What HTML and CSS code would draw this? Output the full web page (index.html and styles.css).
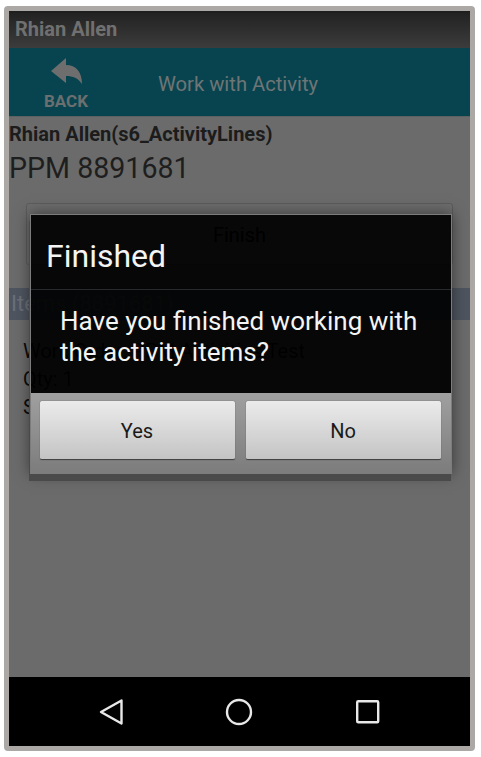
FILE: index.html
```html
<!DOCTYPE html>
<html lang="en">
<head>
  <meta charset="UTF-8">
  <title>Work with Activity</title>
  <link rel="stylesheet" href="styles.css">
</head>
<body>

  <div class="phone">
    <!-- TITLE BAR -->
    <div class="title-bar">Rhian Allen</div>

    <!-- HEADER -->
    <header class="app-header">
      <a class="back-btn" href="#">
        <svg class="back-icon" width="32" height="26" viewBox="0 0 32 26">
          <path d="M0 13 L15 0 L15 7 C25 7 31 14 31 26 C27 20 22 18 15 18 L15 25 Z" fill="#6e6e6e"/>
        </svg>
        <span>BACK</span>
      </a>
      <h1 class="app-title">Work with Activity</h1>
    </header>

    <!-- CONTENT (dimmed) -->
    <main class="content">
      <p class="owner">Rhian Allen(s6_ActivityLines)</p>
      <p class="ref">PPM 8891681</p>
      <div class="finish-btn">Finish</div>
      <div class="section-bar">Items (8891681)</div>
      <div class="item">
        <p>Work Order: PPM Activities Test</p>
        <p>Qty: 1</p>
        <p>Status: Open</p>
      </div>
    </main>

    <!-- NAV BAR -->
    <nav class="nav-bar">
      <svg width="26" height="28" viewBox="0 0 26 28">
        <path d="M23.5 2.5 L3 14 L23.5 25.5 Z" fill="none" stroke="#e8e8e8" stroke-width="2.4" stroke-linejoin="round"/>
      </svg>
      <svg width="28" height="28" viewBox="0 0 28 28">
        <circle cx="14" cy="14" r="12" fill="none" stroke="#e8e8e8" stroke-width="2.4"/>
      </svg>
      <svg class="nav-recent" width="24" height="24" viewBox="0 0 24 24">
        <rect x="1.2" y="1.2" width="21" height="21" rx="1" fill="none" stroke="#e8e8e8" stroke-width="2.4"/>
      </svg>
    </nav>

    <!-- DIALOG -->
    <div class="dialog">
      <h2 class="dialog-title">Finished</h2>
      <p class="dialog-msg">Have you finished working with the activity items?</p>
      <div class="dialog-actions">
        <button type="button">Yes</button>
        <button type="button">No</button>
      </div>
    </div>
  </div>

</body>
</html>
```

FILE: styles.css
```css
/* ---------- BASE ---------- */
* {
  margin: 0;
  padding: 0;
  box-sizing: border-box;
  font-family: Roboto, 'Noto Sans', sans-serif;
}
body {
  background: #fff;
  padding: 6px 6px 6px 4px;
  overflow: hidden;
}
a {
  text-decoration: none;
  color: inherit;
}

/* ---------- FRAME ---------- */
.phone {
  position: relative;
  width: 471px;
  height: 745px;
  border: 5px solid #aca8a6;
  border-radius: 4px;
  background: #6b6b6b;
  display: flex;
  flex-direction: column;
}

/* ---------- TITLE BAR ---------- */
.title-bar {
  height: 37px;
  flex-shrink: 0;
  padding-left: 6px;
  line-height: 37px;
  font-size: 20px;
  font-weight: 700;
  color: #707070;
  background: linear-gradient(#1c1c1c, #232323 8%, #3c3c3c);
}

/* ---------- HEADER ---------- */
.app-header {
  height: 69px;
  flex-shrink: 0;
  display: flex;
  align-items: center;
  background: #08444f;
  border-bottom: 1px solid #5c6262;
}
.back-btn {
  width: 114px;
  padding-top: 5px;
  display: flex;
  flex-direction: column;
  align-items: center;
  gap: 7px;
  font-size: 17px;
  line-height: 20px;
  font-weight: 700;
  color: #6a6f70;
}
.back-icon {
  margin-left: 1px;
}
.app-title {
  margin-left: 35px;
  padding-top: 4px;
  font-size: 20.2px;
  font-weight: 400;
  color: #6f7576;
}

/* ---------- CONTENT ---------- */
.content {
  flex: 1;
  color: #161616;
}
.owner {
  margin-top: 5px;
  font-size: 20px;
  font-weight: 700;
  line-height: 24px;
  color: #1c1c1c;
}
.ref {
  margin-top: 4px;
  font-size: 28.6px;
  line-height: 36px;
  color: #1e1e1e;
}
.finish-btn {
  height: 62px;
  margin: 17px 17px 23px;
  line-height: 62px;
  text-align: center;
  font-size: 20px;
  color: #000;
  background: #6d6d6d;
  border: 1px solid #5c5c5c;
  border-radius: 3px;
}
.section-bar {
  height: 32px;
  padding-left: 2px;
  line-height: 32px;
  font-size: 22px;
  color: #6a7078;
  background: #4f5560;
}
.item {
  padding: 17px 0 0 14px;
  font-size: 20px;
  line-height: 28px;
  color: #0c0c0c;
}

/* ---------- NAV BAR ---------- */
.nav-bar {
  height: 69px;
  flex-shrink: 0;
  display: flex;
  align-items: center;
  gap: 101px;
  padding-left: 89px;
  background: #000;
}
.nav-recent {
  margin-left: 2px;
}

/* ---------- DIALOG ---------- */
.dialog {
  position: absolute;
  top: 203px;
  left: 21px;
  width: 422px;
  height: 260px;
  display: flex;
  flex-direction: column;
  background: rgba(0,0,0,0.93);
  border: 1px solid #7c7c7c;
  box-shadow: -1px 7px 0 #4a4a4a, 0 0 14px rgba(0,0,0,0.5);
}
.dialog-title {
  height: 75px;
  padding: 23px 0 0 15px;
  font-size: 32px;
  font-weight: 400;
  line-height: 36px;
  color: #f4f4f4;
  border-bottom: 1px solid #2a2a2a;
}
.dialog-msg {
  flex: 1;
  padding: 16px 20px 0 29px;
  font-size: 26px;
  line-height: 31px;
  color: #f4f4f4;
}
.dialog-actions {
  height: 80px;
  flex-shrink: 0;
  padding: 8px 10px 0 9px;
  display: flex;
  gap: 11px;
  background: linear-gradient(#a0a0a0, #7c7c7c);
}
.dialog-actions button {
  flex: 1;
  height: 59px;
  padding: 1px 1px 0 0;
  font-size: 20px;
  color: #1a1a1a;
  background: linear-gradient(#ebebeb, #c4c4c4);
  border: none;
  border-bottom: 1px solid #444;
  border-radius: 2px;
  box-shadow: 0 0 1px #333;
}
```
